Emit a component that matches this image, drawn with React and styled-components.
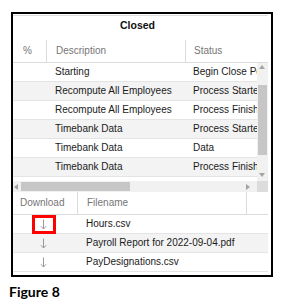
import React from 'react';
import styled, { createGlobalStyle } from 'styled-components';

const GlobalStyle = createGlobalStyle`
  html, body {
    margin: 0;
    padding: 0;
    background: #fff;
  }
  body {
    font-family: "Liberation Sans", Arial, sans-serif;
  }
`;

const Page = styled.div`
  width: 289px;
  height: 306px;
  box-sizing: border-box;
  padding: 12px 0 0 11px;
`;

const Frame = styled.div`
  width: 262px;
  height: 265px;
  box-sizing: border-box;
  border: 2px solid #000;
  padding: 1px 3px 0 0;
`;

const Panel = styled.div`
  border-top: 1px solid #dedede;
  display: flex;
  flex-direction: column;
`;

const Title = styled.div`
  height: 24px;
  box-sizing: border-box;
  padding: 3px 6px 0 0;
  text-align: center;
  font-size: 10.5px;
  line-height: 13px;
  font-weight: bold;
  color: #111;
`;

const HeaderRow = styled.div`
  display: flex;
  height: 22px;
  border-bottom: 1px solid #dcdcdc;
`;

const HeaderCell = styled.div`
  width: ${(p) => p.$w}px;
  flex: none;
  box-sizing: border-box;
  padding-left: ${(p) => p.$pad ?? 9}px;
  border-left: ${(p) => (p.$sep ? '1px solid #dcdcdc' : 'none')};
  font-size: 10px;
  line-height: 22px;
  color: #767676;
  white-space: nowrap;
  overflow: hidden;
`;

const Body = styled.div`
  display: flex;
  height: 118px;
`;

const Viewport = styled.div`
  flex: 1;
  overflow: hidden;
`;

const Row = styled.div`
  display: flex;
  height: 18px;
  border-bottom: 1px solid #e4e4e4;
  background: ${(p) => (p.$alt ? '#f3f3f3' : '#fff')};
  width: ${(p) => p.$w || 'auto'};
`;

const Cell = styled.div`
  width: ${(p) => p.$w}px;
  flex: none;
  box-sizing: border-box;
  padding-left: ${(p) => p.$pad ?? 9}px;
  font-size: 10px;
  line-height: 18px;
  color: #1a1a1a;
  white-space: nowrap;
  overflow: hidden;
`;

const VScroll = styled.div`
  width: 11px;
  flex: none;
  background: #f1f1f1;
  position: relative;
`;

const VThumb = styled.div`
  position: absolute;
  left: 1px;
  right: 1px;
  top: 22px;
  height: 70px;
  background: #c6c6c6;
`;

const HScrollRow = styled.div`
  display: flex;
  height: 11px;
`;

const HTrack = styled.div`
  flex: 1;
  background: #f1f1f1;
  position: relative;
`;

const HThumb = styled.div`
  position: absolute;
  top: 1px;
  bottom: 1px;
  left: 8px;
  width: 109px;
  background: #c6c6c6;
`;

const Corner = styled.div`
  width: 11px;
  flex: none;
  background: #dcdcdc;
`;

const Arrow = styled.svg`
  position: absolute;
  ${(p) => p.$pos}
`;

const ArrowCell = styled.div`
  width: 64px;
  flex: none;
  display: flex;
  justify-content: center;
  align-items: center;
  padding-right: 3px;
  box-sizing: border-box;
`;

const ArrowMark = styled.span`
  display: inline-flex;
  justify-content: center;
  align-items: center;
  width: 18px;
  height: 13px;
  margin-top: 1px;
  outline: ${(p) => (p.$marked ? '3px solid #f00' : 'none')};
`;

const Caption = styled.div`
  margin: 7px 0 0 -2px;
  font-family: Lato, "Open Sans", sans-serif;
  font-weight: bold;
  font-size: 14px;
  line-height: 16px;
  color: #000;
`;

const rows = [
  ['Starting', 'Begin Close Period'],
  ['Recompute All Employees', 'Process Started'],
  ['Recompute All Employees', 'Process Finished'],
  ['Timebank Data', 'Process Started'],
  ['Timebank Data', 'Data'],
  ['Timebank Data', 'Process Finished'],
  ['Timebank Data', 'Process Finished'],
];

const files = ['Hours.csv', 'Payroll Report for 2022-09-04.pdf', 'PayDesignations.csv'];

const DownArrow = () => (
  <svg width="7" height="11" viewBox="0 0 7 11">
    <path d="M3.5 0.5V10M1 7.3L3.5 10L6 7.3" fill="none" stroke="#9a9a9a" strokeWidth="1" />
  </svg>
);

const Tri = ({ dir, pos }) => {
  const pts = {
    up: '0,4 3,0 6,4',
    down: '0,0 3,4 6,0',
    left: '4,0 0,3 4,6',
    right: '0,0 4,3 0,6',
  }[dir];
  const vertical = dir === 'up' || dir === 'down';
  return (
    <Arrow $pos={pos} width={vertical ? 6 : 4} height={vertical ? 4 : 6}>
      <polygon points={pts} fill="#a3a3a3" />
    </Arrow>
  );
};

export default function App() {
  return (
    <>
      <GlobalStyle />
      <Page>
        <Frame>
          <Panel>
            <Title>Closed</Title>
            <HeaderRow>
              <HeaderCell $w={33} $pad={10}>%</HeaderCell>
              <HeaderCell $w={139} $sep>Description</HeaderCell>
              <HeaderCell $w={83} $sep $pad={8}>Status</HeaderCell>
            </HeaderRow>
            <Body>
              <Viewport>
                {rows.map(([d, s], i) => (
                  <Row key={i} $alt={i % 2 === 1} $w="300px">
                    <Cell $w={33} />
                    <Cell $w={139}>{d}</Cell>
                    <Cell $w={128} $pad={8}>{s}</Cell>
                  </Row>
                ))}
              </Viewport>
              <VScroll>
                <Tri dir="up" pos="top: 2px; left: 2px;" />
                <VThumb />
                <Tri dir="down" pos="bottom: 4px; left: 2px;" />
              </VScroll>
            </Body>
            <HScrollRow>
              <HTrack>
                <Tri dir="left" pos="top: 3px; left: 1px;" />
                <HThumb />
                <Tri dir="right" pos="top: 3px; right: 7px;" />
              </HTrack>
              <Corner />
            </HScrollRow>
            <HeaderRow>
              <HeaderCell $w={64} $pad={7}>Download</HeaderCell>
              <HeaderCell $w={169} $sep>Filename</HeaderCell>
              <HeaderCell $w={22} $sep />
            </HeaderRow>
            {files.map((f, i) => (
              <Row key={f} $alt={i % 2 === 1}>
                <ArrowCell>
                  <ArrowMark $marked={i === 0}>
                    <DownArrow />
                  </ArrowMark>
                </ArrowCell>
                <Cell $w={191}>{f}</Cell>
              </Row>
            ))}
          </Panel>
        </Frame>
        <Caption>Figure 8</Caption>
      </Page>
    </>
  );
}
